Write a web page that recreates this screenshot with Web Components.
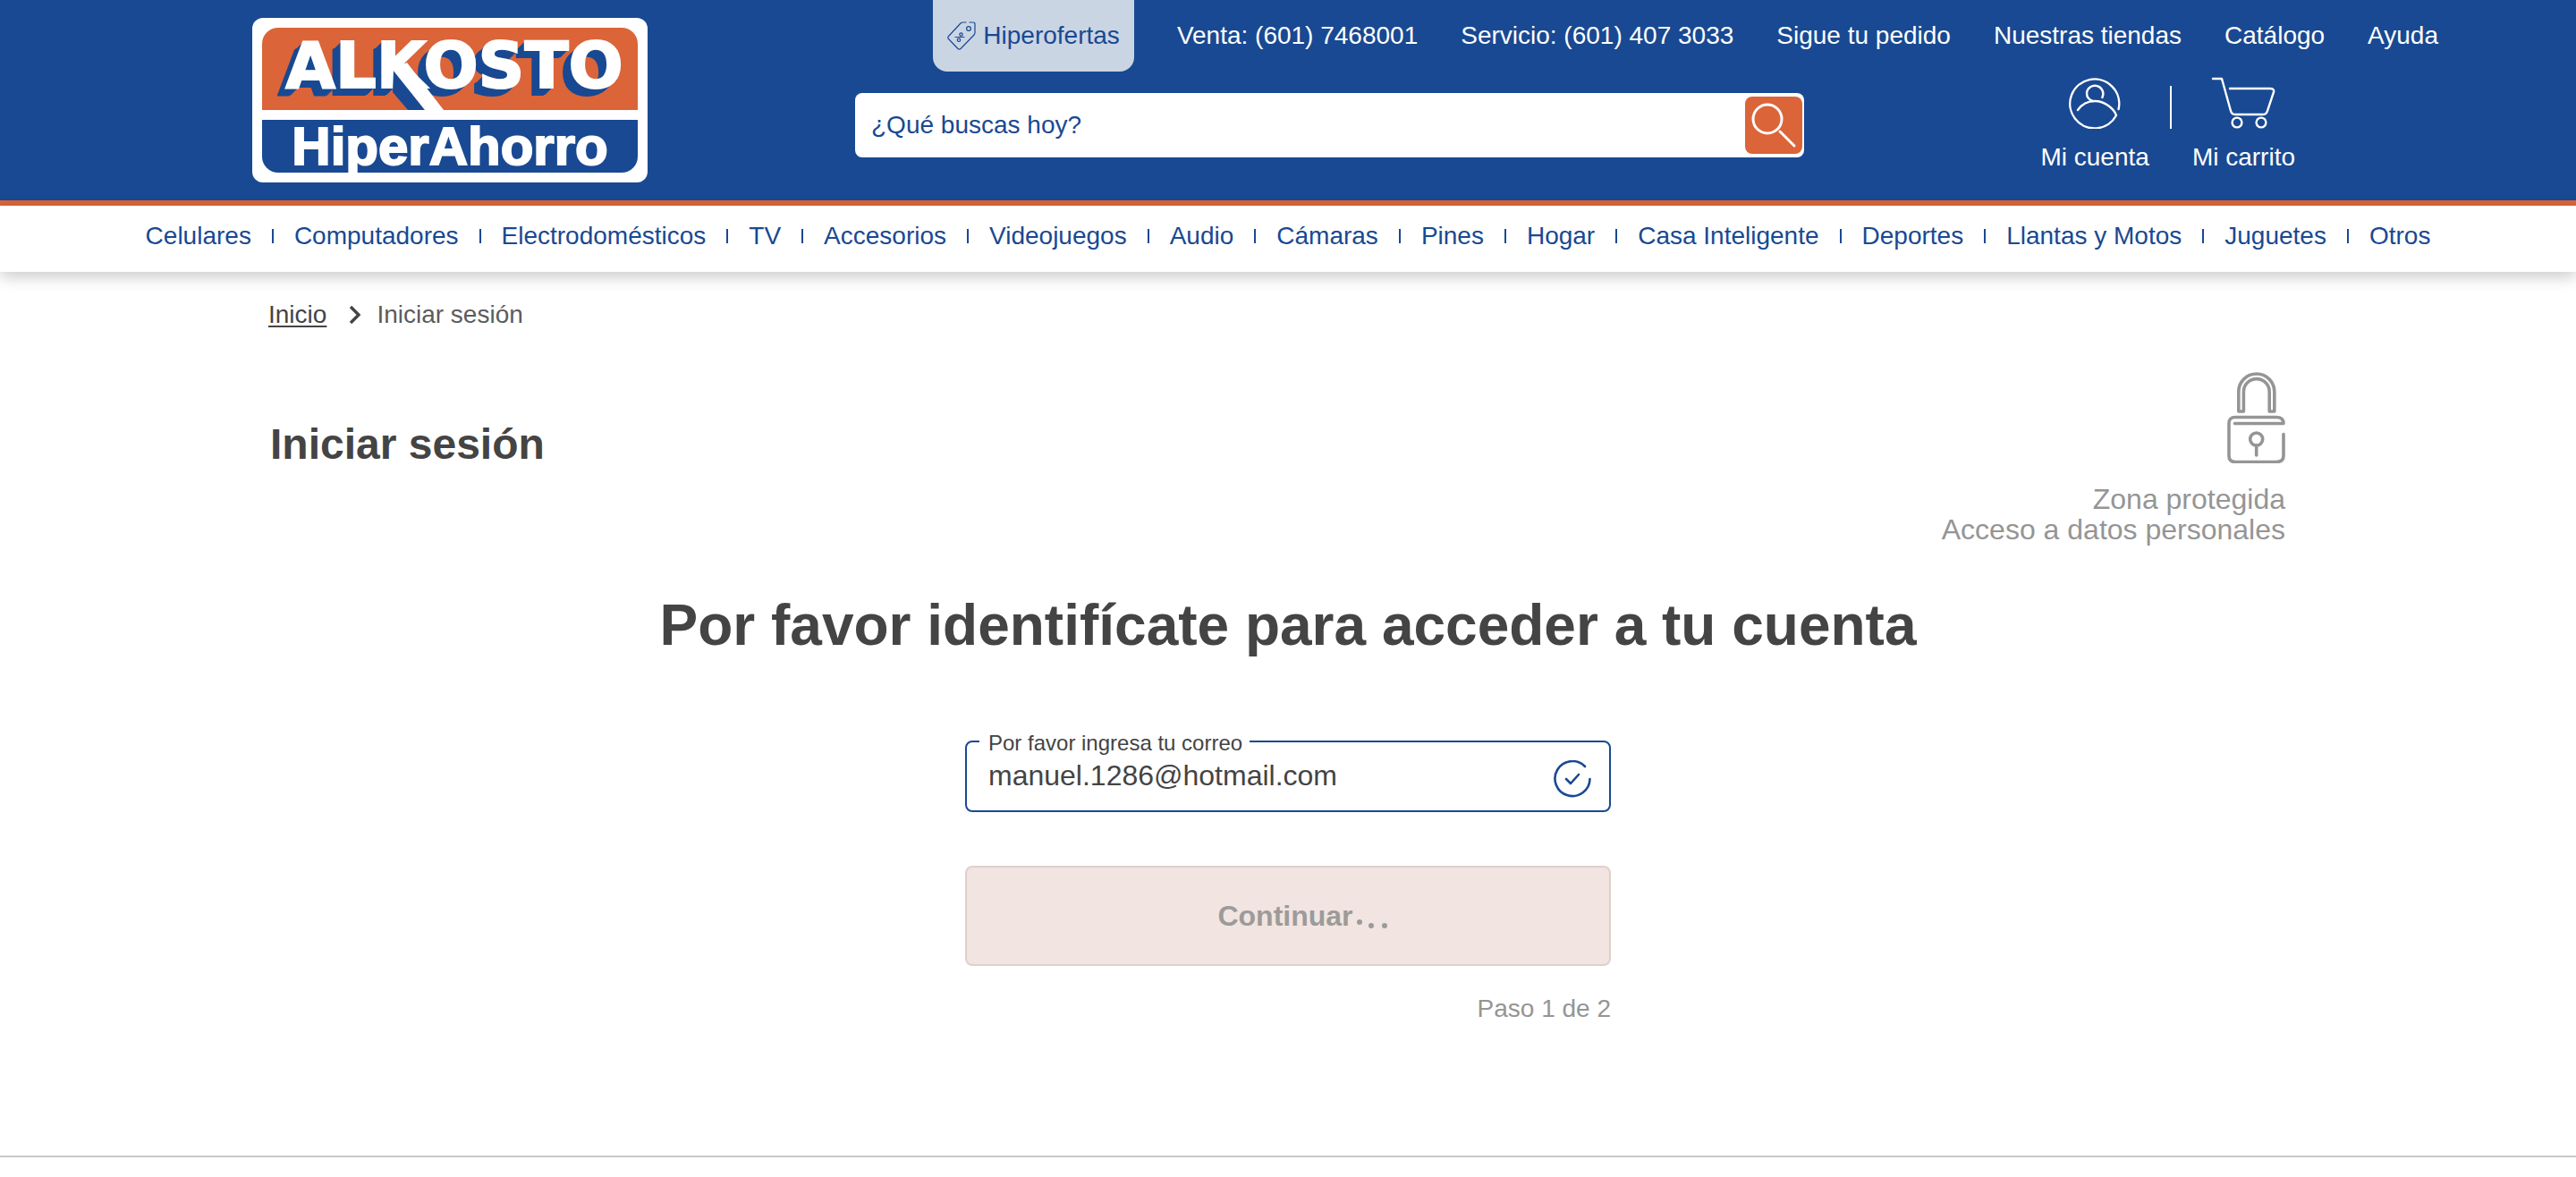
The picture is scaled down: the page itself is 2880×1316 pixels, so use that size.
<!DOCTYPE html>
<html lang="es">
<head>
<meta charset="utf-8">
<title>Iniciar sesión | Alkosto</title>
<style>
  :root { --blue: #194992; --orange: #db6439; --ink: #444; --muted: #959595; }
  body { margin: 0; background: #fff; color: var(--ink); font-family: "Liberation Sans", Arial, sans-serif; font-size: 28px; line-height: 32px; }
</style>
</head>
<body>
<alk-page></alk-page>
<script>
const define = (name, markup, setup) => customElements.define(name, class extends HTMLElement {
  constructor() {
    super();
    this.attachShadow({ mode: 'open' }).innerHTML = '<style>*{box-sizing:border-box}</style>' + markup;
  }
  connectedCallback() { if (setup) setup(this, this.shadowRoot); }
});

define('alk-logo', `
<style>
  :host { display: block; width: 442px; flex: none; }
  a { display: flex; flex-direction: column; gap: 11px; height: 184px; padding: 11px; border-radius: 12px; background: #fff; color: #fff; text-decoration: none; white-space: nowrap; }
  span { display: flex; justify-content: center; align-items: center; }
  .brand { position: relative; height: 92px; border-radius: 18px 18px 0 0; background: var(--orange); padding: 0 4px 0 14px; align-items: flex-start;
    font: bold 72px/84px "DejaVu Sans", sans-serif; -webkit-text-stroke: 2px #fff;
    text-shadow: -1px 1px var(--blue), -2px 2px var(--blue), -3px 3px var(--blue), -4px 4px var(--blue), -5px 5px var(--blue), -6px 6px var(--blue), -7px 7px var(--blue), -8px 8px var(--blue), -9px 8px var(--blue), -10px 9px var(--blue); }
  .brand svg { position: absolute; left: 0; top: 0; }
  .tag { height: 59px; border-radius: 0 0 18px 18px; background: var(--blue); font: bold 60px/59px "Liberation Sans", Arial, sans-serif; -webkit-text-stroke: 2px #fff; }
</style>
<a href="#"><span class="brand">ALKOSTO<svg width="420" height="92" viewBox="0 0 420 92"><path fill="var(--blue)" d="M147 47l-1 25 17 20h19z"/><path fill="#fff" d="M146 47l16-8 41 53h-21z"/></svg></span><span class="tag">HiperAhorro</span></a>`);

define('alk-top-links', `
<style>
  :host { display: block; }
  nav { display: flex; justify-content: flex-end; align-items: center; gap: 48px; height: 80px; padding-right: 154px; white-space: nowrap; }
  a { color: #fff; text-decoration: none; }
  .offer { display: flex; align-items: center; gap: 8px; height: 80px; padding: 0 16px; border-radius: 0 0 16px 16px; background: #cad5e4; color: var(--blue); }
</style>
<nav>
  <a class="offer" href="#"><svg width="32" height="32" viewBox="0 0 32 32" fill="none" stroke="var(--blue)" stroke-width="1.2" stroke-linecap="round" stroke-linejoin="round"><path d="M21 1h-3.500q-1.500 0-2.500 1L1.500 16.500q-1.500 1.500 0 3L12 30.500q1.500 1.300 3 0L30 15q1-1 1-2.500V3q0-2-2-2h-4"/><circle cx="24" cy="8" r="2.400"/><path d="M9 17.500h10"/><circle cx="15.500" cy="14.500" r="1.700"/><circle cx="13" cy="20.800" r="1.700"/></svg>Hiperofertas</a>
  <a href="#">Venta: (601) 7468001</a><a href="#">Servicio: (601) 407 3033</a><a href="#">Sigue tu pedido</a><a href="#">Nuestras tiendas</a><a href="#">Catálogo</a><a href="#">Ayuda</a>
</nav>`);

define('alk-search', `
<style>
  :host { display: block; }
  form { display: flex; align-items: center; height: 72px; padding-right: 2px; border-radius: 8px; background: #fff; }
  input { flex: 1; min-width: 0; height: 72px; padding: 0 18px; border: 0; background: none; outline: 0; font: inherit; color: var(--blue); }
  input::placeholder { color: var(--blue); opacity: 1; }
  button { width: 64px; height: 64px; padding: 0; border: 0; border-radius: 8px; background: var(--orange); }
  svg { display: block; }
</style>
<form><input type="text" placeholder="¿Qué buscas hoy?" aria-label="Buscar"><button type="button" aria-label="Buscar"><svg width="64" height="64" viewBox="0 0 64 64" fill="none" stroke="#fff" stroke-width="3" stroke-linecap="round"><circle cx="25" cy="25" r="16"/><path d="M39 39l16 16"/></svg></button></form>`);

define('alk-account', `
<style>
  :host { display: block; }
  div { display: flex; gap: 23px; white-space: nowrap; }
  a { display: flex; flex-direction: column; align-items: center; gap: 16px; color: #fff; text-decoration: none; }
  i { width: 2px; height: 48px; margin-top: 10px; background: #fff; }
  svg { fill: none; stroke: #fff; stroke-width: 2.400; stroke-linecap: round; stroke-linejoin: round; }
</style>
<div>
  <a href="#"><svg width="58" height="58" viewBox="0 0 58 58"><path d="M55.600 36A27.500 27.500 0 1 0 53 43q-2-6-9-11-7-5-15-5-12 0-19 10"/><path d="M27 27q-7-2-7-9a9.200 9.200 0 1 1 17.400 5"/></svg>Mi cuenta</a>
  <i></i>
  <a href="#"><svg width="72" height="58" viewBox="0 0 72 58"><path d="M2 2h10l10 36q1 4 5 4h31q4 0 5-4l7-21q1-4-4-4H21"/><circle cx="29" cy="51" r="5.400"/><circle cx="56" cy="51" r="5.400"/></svg>Mi carrito</a>
</div>`);

define('alk-header', `
<style>
  :host { display: block; height: 230px; background: var(--blue); border-bottom: 6px solid var(--orange); box-sizing: border-box; }
  .row { display: flex; padding-left: 282px; }
  alk-logo { margin-top: 20px; }
  .main { flex: 1; min-width: 0; }
  .tools { display: flex; align-items: flex-start; padding: 6px 314px 0 232px; }
  alk-search { flex: 1; margin: 18px 264px 0 0; }
</style>
<div class="row"><alk-logo></alk-logo><div class="main"><alk-top-links></alk-top-links><div class="tools"><alk-search></alk-search><alk-account></alk-account></div></div></div>`);

define('alk-categories', `
<style>
  :host { display: block; background: #fff; box-shadow: 0 6px 16px rgba(0,0,0,.2); }
  nav { display: flex; justify-content: center; align-items: center; gap: 23px; padding: 18px 0 24px; white-space: nowrap; }
  a { color: var(--blue); text-decoration: none; }
  i { width: 2px; height: 16px; background: var(--blue); }
</style><nav></nav>`, (el, root) => {
  root.querySelector('nav').innerHTML = el.getAttribute('items').split('|').map(t => '<a href="#">' + t + '</a>').join('<i></i>');
});

define('alk-breadcrumb', `
<style>
  :host { display: flex; align-items: center; }
  a { color: var(--ink); text-decoration: underline; text-decoration-thickness: 2px; text-underline-offset: 3px; }
  svg { margin: 0 17px 0 25px; }
  span { color: #5c5c5c; }
</style>
<a href="#">Inicio</a><svg width="14" height="22" viewBox="0 0 14 22" fill="none" stroke="#444" stroke-width="3.400"><path d="M2 2l9 9-9 9"/></svg><span>Iniciar sesión</span>`);

define('alk-secure', `
<style>
  :host { display: flex; flex-direction: column; align-items: flex-end; gap: 23px; color: var(--muted); font-size: 32px; line-height: 34px; text-align: right; }
  svg { fill: none; stroke: var(--muted); stroke-width: 3.600; stroke-linecap: round; stroke-linejoin: round; }
</style>
<svg width="65" height="102" viewBox="0 0 65 102"><path d="M12.800 44V22a20 20 0 0 1 40 0v22h-5.600V22a14.400 14.400 0 0 0-28.800 0v22z"/><path d="M8.500 57.500H63q0-7-8-7H9q-7 0-7 7v36q0 7 7 7h46q8 0 8-7V69.500"/><circle cx="32.700" cy="75" r="7"/><path d="M32.700 82v11"/></svg>
<div>Zona protegida<br>Acceso a datos personales</div>`);

define('alk-email-field', `
<style>
  :host { display: block; }
  fieldset { display: flex; align-items: center; height: 94px; min-width: 0; margin: 0; padding: 0 20px 9px 24px; border: 2px solid var(--blue); border-radius: 8px; }
  legend { margin-left: -10px; padding: 4px 8px 0 10px; font-size: 24px; line-height: 26px; }
  label { display: block; }
  input { flex: 1; min-width: 0; height: 40px; margin: 0 0 6px; padding: 0; border: 0; outline: 0; background: none; font: inherit; font-size: 32px; color: var(--ink); }
  svg { fill: none; stroke: var(--blue); stroke-width: 2.600; stroke-linecap: round; stroke-linejoin: round; }
</style>
<fieldset><legend><label for="mail">Por favor ingresa tu correo</label></legend><input id="mail" type="text" value="manuel.1286@hotmail.com"><svg width="42" height="42" viewBox="0 0 42 42"><path d="M35 7A19.500 19.500 0 1 0 40.500 21"/><path d="M14 21l5 5 9-10"/></svg></fieldset>`);

define('alk-submit', `
<style>
  :host { display: block; }
  button { display: flex; justify-content: center; align-items: center; gap: 4px; width: 100%; height: 112px; padding: 0 0 0 32px; border: 2px solid #dfd1cc; border-radius: 8px; background: #f2e4e0; color: #9b9b9b; font: bold 32px/36px "Liberation Sans", Arial, sans-serif; }
  .dots { display: flex; align-items: flex-end; gap: 9px; height: 14px; margin-top: 14px; }
  i { width: 6px; height: 6px; border-radius: 50%; background: #9b9b9b; }
  i:first-child { align-self: center; margin-right: -2px; }
</style>
<button type="button" disabled><slot></slot><span class="dots"><i></i><i></i><i></i></span></button>`);

define('alk-login', `
<style>
  :host { display: block; padding: 32px 325px 148px 300px; }
  .head { display: flex; justify-content: space-between; align-items: flex-start; margin-top: 48px; }
  h1 { margin: 53px 0 0 2px; font-size: 48px; line-height: 56px; }
  .step { padding-left: 25px; }
  h2 { margin: 54px 0 0; font-size: 64px; line-height: 72px; text-align: center; }
  form { width: 722px; margin: 79px auto 0; }
  alk-submit { margin-top: 60px; }
  p { margin: 32px 0 0; color: var(--muted); text-align: right; }
</style>
<alk-breadcrumb></alk-breadcrumb>
<div class="head"><h1>Iniciar sesión</h1><alk-secure></alk-secure></div>
<div class="step"><h2>Por favor identifícate para acceder a tu cuenta</h2>
<form><alk-email-field></alk-email-field><alk-submit>Continuar</alk-submit><p>Paso 1 de 2</p></form></div>`);

define('alk-page', `
<style>
  :host { display: block; }
  footer { border-top: 2px solid #c8c8c8; height: 22px; }
</style>
<alk-header></alk-header>
<alk-categories items="Celulares|Computadores|Electrodomésticos|TV|Accesorios|Videojuegos|Audio|Cámaras|Pines|Hogar|Casa Inteligente|Deportes|Llantas y Motos|Juguetes|Otros"></alk-categories>
<main><alk-login></alk-login></main>
<footer></footer>`);
</script>
</body>
</html>
